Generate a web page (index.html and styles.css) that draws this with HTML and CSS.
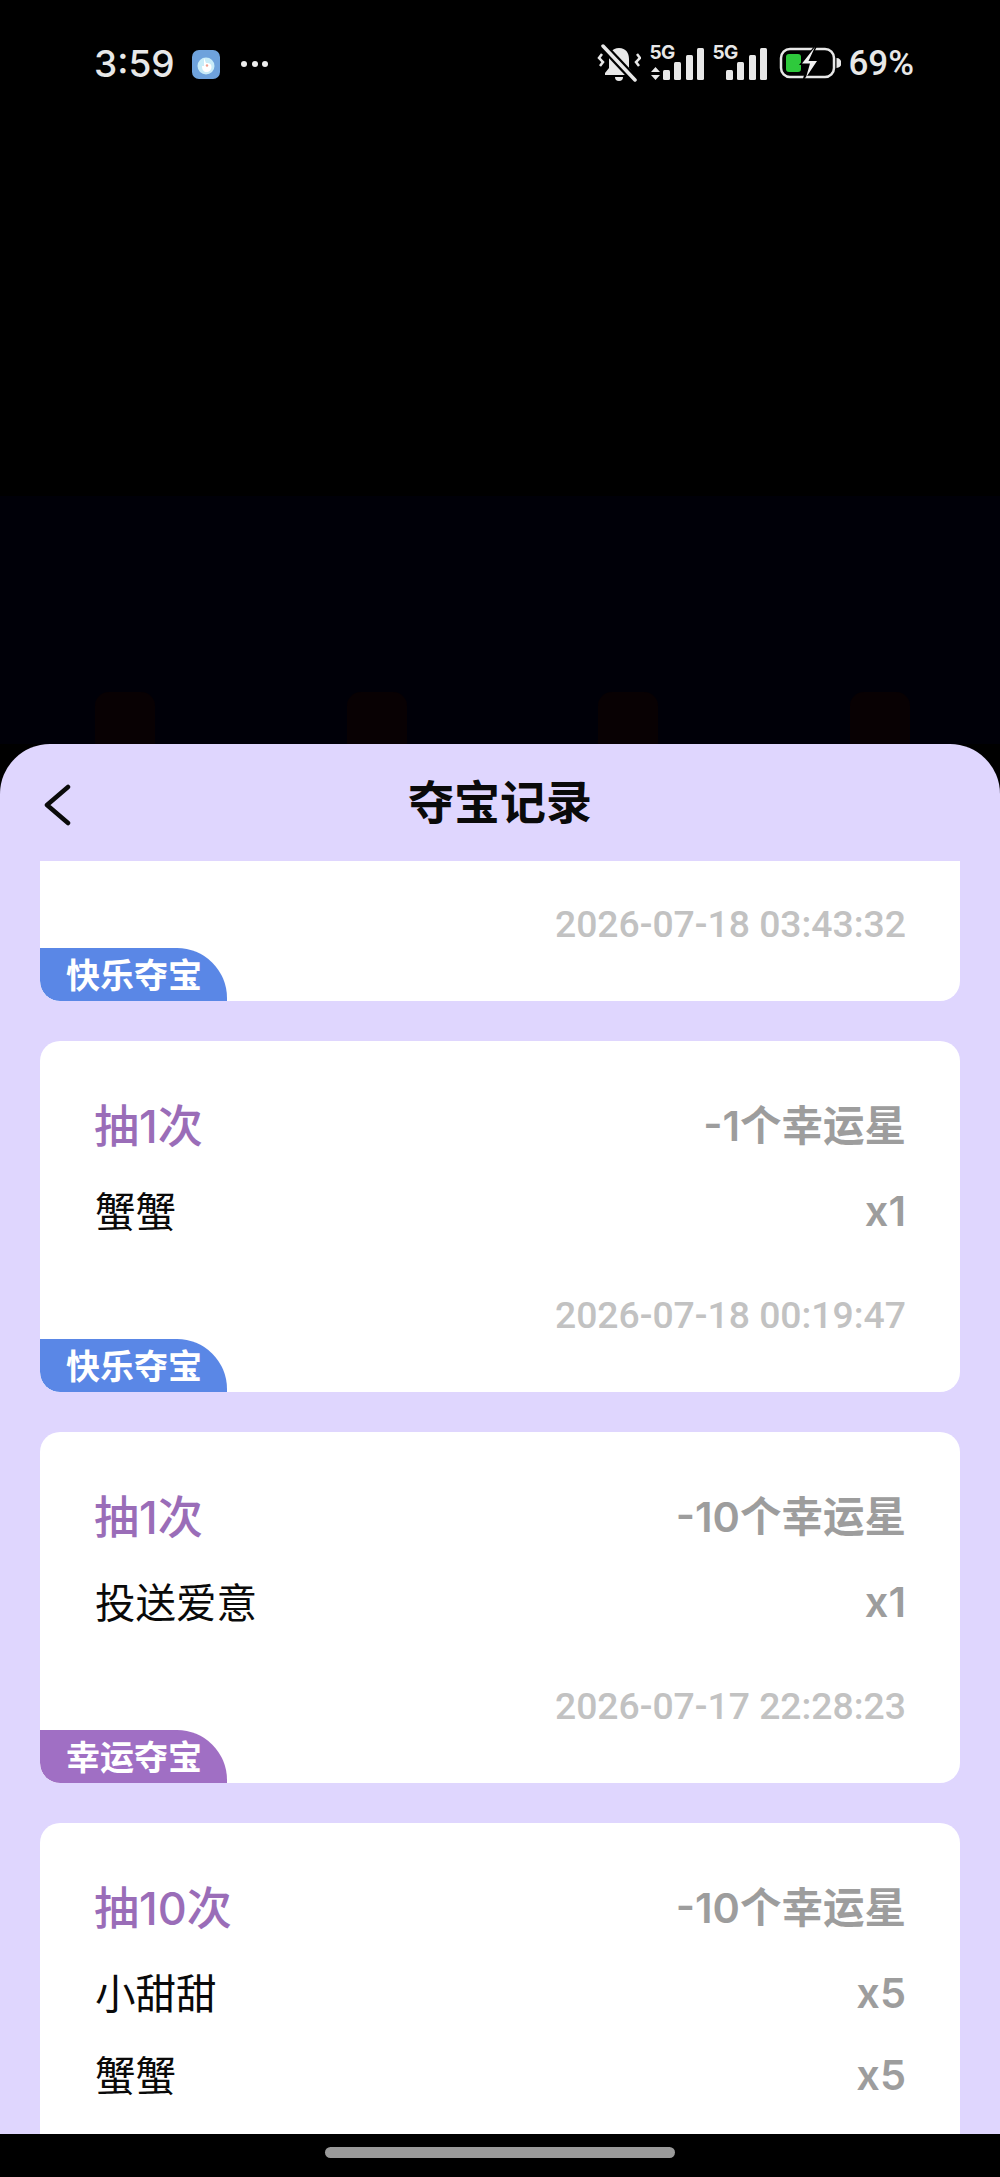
FILE: index.html
```html
<!DOCTYPE html>
<html lang="zh-CN">
<head>
<meta charset="utf-8">
<title>夺宝记录</title>
<link rel="stylesheet" href="styles.css">
</head>
<body>
<div class="screen">
  <header class="status">
    <div class="status-left">
      <span class="time">3:59</span>
      <svg class="app-icon" width="28" height="29" viewBox="0 0 28 29"><rect width="28" height="29" rx="7" fill="#6ea2dc"/><circle cx="14" cy="16" r="8.500" fill="#c9ecf8"/><path d="M12 8v8h-2c0 4 2 6 4.500 6s5-2 5-5-2-4-4-4h-1.500z" fill="#fff"/><circle cx="15" cy="15.500" r="1.200" fill="#f0a090"/></svg>
      <span class="dots"><i></i><i></i><i></i></span>
    </div>
    <div class="status-right">
      <svg class="bell" width="44" height="40" viewBox="0 0 44 40" fill="none">
        <path d="M22 4c-7 0-10 5-10 11v9l-4 5v2h28v-2l-4-5v-9c0-6-3-11-10-11z" fill="#e8e8e8"/>
        <path d="M18 33h8a4 4 0 0 1-8 0z" fill="#e8e8e8"/>
        <path d="M6 2l32 34" stroke="#000" stroke-width="8"/>
        <path d="M6 2l32 34" stroke="#e8e8e8" stroke-width="3.500" stroke-linecap="round"/>
        <path d="M5 10l-3 4 4 4-3 4M40 10l3 4-4 4 3 4" stroke="#e8e8e8" stroke-width="2.500"/>
      </svg>
      <div class="sim">
        <span class="sim-label">5G</span>
        <svg class="sim-arrows" width="9" height="13" viewBox="0 0 9 13"><path d="M4.500 0L9 5H0zM4.500 13L0 8h9z" fill="#e8e8e8"/></svg>
        <span class="bars"><i class="b1"></i><i class="b2"></i><i class="b3"></i><i class="b4"></i></span>
      </div>
      <div class="sim">
        <span class="sim-label">5G</span>
        <span class="bars"><i class="b1"></i><i class="b2"></i><i class="b3"></i><i class="b4"></i></span>
      </div>
      <svg class="battery" width="62" height="38" viewBox="0 0 62 38" fill="none">
        <rect x="2" y="5" width="53" height="28" rx="9" stroke="#e8e8e8" stroke-width="2.500"/>
        <path d="M57.500 14a5 5 0 0 1 0 10z" fill="#e8e8e8"/>
        <rect x="7" y="10" width="15" height="18" rx="3" fill="#2ec93c"/>
        <path d="M37 0L20 21h8l-5 17 18-23h-9l7-15z" fill="#000"/>
        <path d="M36 3L23 19.500h8l-4 14L38 17h-8.500L36 3z" fill="#f2f2f2"/>
      </svg>
      <span class="percent">69%</span>
    </div>
  </header>

  <div class="backdrop">
    <div class="ghost-row"><i></i><i></i><i></i><i></i></div>
  </div>

  <section class="sheet">
    <div class="sheet-head">
      <svg class="back" width="28" height="42" viewBox="0 0 28 42" fill="none"><path d="M25 3L4 21l21 18" stroke="#0a0a0a" stroke-width="4.500" stroke-linecap="round" stroke-linejoin="round"/></svg>
      <h1 class="title">夺宝记录</h1>
    </div>
    <div class="list">
      <article class="card card-cut">
        <div class="date">2026-07-18 03:43:32</div>
        <div class="tag tag-blue">快乐夺宝</div>
      </article>
      <article class="card">
        <div class="row row-head"><span class="draw">抽1次</span><span class="muted">-1个幸运星</span></div>
        <div class="row"><span class="prize">蟹蟹</span><span class="muted qty">x1</span></div>
        <div class="date">2026-07-18 00:19:47</div>
        <div class="tag tag-blue">快乐夺宝</div>
      </article>
      <article class="card">
        <div class="row row-head"><span class="draw">抽1次</span><span class="muted">-10个幸运星</span></div>
        <div class="row"><span class="prize">投送爱意</span><span class="muted qty">x1</span></div>
        <div class="date">2026-07-17 22:28:23</div>
        <div class="tag tag-purple">幸运夺宝</div>
      </article>
      <article class="card">
        <div class="row row-head"><span class="draw">抽10次</span><span class="muted">-10个幸运星</span></div>
        <div class="row"><span class="prize">小甜甜</span><span class="muted qty">x5</span></div>
        <div class="row"><span class="prize">蟹蟹</span><span class="muted qty">x5</span></div>
      </article>
    </div>
  </section>

  <footer class="navbar"><span class="home"></span></footer>
</div>
</body>
</html>
```
FILE: styles.css
```css
* { box-sizing: border-box; }
html, body { margin: 0; padding: 0; background: #000; }
body { font-family: Inter, "Noto Sans CJK SC", sans-serif; }

.screen {
  width: 1000px;
  height: 2177px;
  display: flex;
  flex-direction: column;
  overflow: hidden;
  background: #000;
}

/* Status bar */
.status {
  height: 100px;
  flex: none;
  padding: 44px 86px 0 94px;
  display: flex;
  justify-content: space-between;
  align-items: flex-start;
  color: #e8e8e8;
}
.status-left { display: flex; align-items: center; height: 40px; }
.time { font-size: 37px; font-weight: 500; line-height: 42px; width: 98px; }
.dots { display: flex; gap: 4.500px; margin-left: 21px; }
.dots i { width: 6px; height: 6px; border-radius: 50%; background: #eee; }
.status-right { display: flex; align-items: flex-start; height: 40px; }
.sim {
  position: relative;
  width: 55px;
  height: 36px;
  margin-left: 8px;
  display: flex;
  justify-content: flex-end;
  align-items: flex-end;
}
.sim-label {
  position: absolute;
  top: 1px;
  left: 0;
  font-size: 19px;
  font-weight: 700;
  line-height: 16px;
  letter-spacing: -.5px;
}
.sim-arrows { position: absolute; left: 2px; bottom: 0; }
.bars { display: flex; align-items: flex-end; gap: 4.500px; }
.bars i { width: 7px; background: #e8e8e8; border-radius: 1.500px; }
.b1 { height: 10px; }
.b2 { height: 18px; }
.b3 { height: 25px; }
.b4 { height: 32px; }
.battery { margin-left: 12px; }
.percent {
  font-family: Roboto, sans-serif;
  font-size: 35px;
  font-weight: 500;
  line-height: 40px;
  margin-left: 7px;
}

/* Dimmed page behind the sheet */
.backdrop {
  flex: 1;
  display: flex;
  align-items: flex-end;
  background: linear-gradient(#000 396px, #000008 396px);
}
.ghost-row {
  width: 100%;
  padding: 0 90px 0 95px;
  display: flex;
  justify-content: space-between;
}
.ghost-row i {
  width: 60px;
  height: 52px;
  border-radius: 14px 14px 0 0;
  background: #080103;
}

/* Sheet */
.sheet {
  height: 1390px;
  flex: none;
  display: flex;
  flex-direction: column;
  background: #dfd6fe;
  border-radius: 50px 50px 0 0;
  overflow: hidden;
}
.sheet-head {
  position: relative;
  height: 117px;
  padding-bottom: 8px;
  flex: none;
  display: flex;
  align-items: center;
  justify-content: center;
}
.back { position: absolute; left: 43px; top: 40px; }
.title {
  margin: 0;
  font-size: 46px;
  font-weight: 700;
  line-height: 60px;
  color: #0a0a0a;
  font-family: "Noto Sans CJK SC", sans-serif;
}
.list {
  flex: 1;
  min-height: 0;
  overflow: hidden;
  padding: 0 40px;
  display: flex;
  flex-direction: column;
  gap: 40px;
}

/* Cards */
.card {
  flex: none;
  height: 351px;
  background: #fff;
  border-radius: 20px;
  padding-top: 41px;
  display: flex;
  flex-direction: column;
  overflow: hidden;
}
.card-cut {
  height: 140px;
  padding-top: 0;
  justify-content: flex-end;
  border-radius: 0 0 20px 20px;
}
.row {
  flex: none;
  height: 82px;
  padding: 0 54px 0 54px;
  display: flex;
  justify-content: space-between;
  align-items: center;
}
.row-head { margin-bottom: 4px; }
.draw { color: #9a6db8; font-size: 45px; font-weight: 500; }
.prize { color: #0a0a0a; font-size: 40.500px; margin-left: 1px; }
.muted { color: #9d9d9d; font-size: 41.500px; font-weight: 600; }
.qty { margin-top: 3px; }
.date {
  flex: none;
  height: 50px;
  margin-top: 39px;
  padding-right: 54px;
  text-align: right;
  font-family: Roboto, sans-serif;
  font-size: 37.300px;
  font-weight: 500;
  line-height: 53px;
  color: #c2c2c2;
}
.card-cut .date { margin-top: 0; }
.tag {
  flex: none;
  width: 187px;
  height: 53px;
  padding-left: 26px;
  align-self: flex-start;
  border-radius: 0 50px 0 20px;
  color: #fff;
  font-size: 34px;
  font-weight: 600;
  line-height: 56px;
}
.tag-blue { background: #5a87e6; }
.tag-purple { background: #a06fc4; }

/* Gesture bar */
.navbar {
  height: 43px;
  flex: none;
  padding-top: 13px;
  display: flex;
  justify-content: center;
  align-items: flex-start;
  background: #000;
}
.home {
  width: 350px;
  height: 11px;
  border-radius: 6px;
  background: #9a9a9a;
}
```
